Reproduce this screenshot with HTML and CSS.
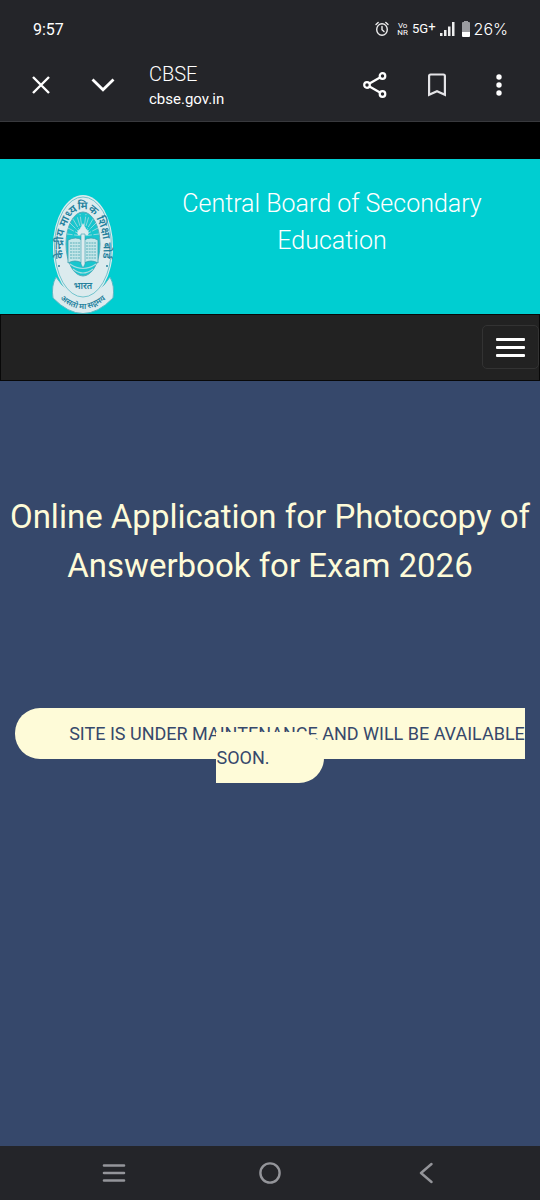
FILE: index.html
```
<!DOCTYPE html>
<html lang="en">
<head>
    <meta charset="UTF-8">
    <meta name="viewport" content="width=device-width, initial-scale=1.0">
    <title>CBSE</title>
    <link rel="stylesheet" href="styles.css">
</head>
<body>
    <!-- Phone status bar and browser toolbar -->
    <div class="top-bar">
        <div class="status-bar">
            <span class="time">9:57</span>
            <div class="status-icons">
                <svg width="14" height="16" viewBox="0 0 14 16" fill="none" stroke="#eee" stroke-width="1.4" stroke-linecap="round">
                    <ellipse cx="7" cy="8.500" rx="5.300" ry="5.800"/>
                    <path d="M7 5.500v3.200l2 1.800M1 3.500l2.200-2M13 3.500l-2.200-2"/>
                </svg>
                <span class="vonr"><span>Vo</span><span>NR</span></span>
                <span class="network">5G<span class="plus">+</span></span>
                <svg width="15" height="14" viewBox="0 0 15 14" fill="#eee">
                    <path d="M0 11h2.500v3H0zM4 8h2.500v6H4zM8 4.500h2.500V14H8zM12 0h2.500v14H12z"/>
                </svg>
                <svg class="battery" width="8" height="16" viewBox="0 0 8 16">
                    <path d="M2 0h4v1h1q1 0 1 1v9H0V2q0-1 1-1h1z" fill="#9b9ca0"/>
                    <path d="M0 11h8v4q0 1-1 1H1q-1 0-1-1z" fill="#fff"/>
                </svg>
                <span class="percent">26%</span>
            </div>
        </div>
        <div class="toolbar">
            <button class="tool-button" aria-label="Close">
                <svg width="18" height="18" viewBox="0 0 18 18" fill="none" stroke="#fff" stroke-width="2.400"><path d="M1 1l16 16M17 1L1 17"/></svg>
            </button>
            <button class="tool-button" aria-label="Minimize">
                <svg width="24" height="14" viewBox="0 0 24 14" fill="none" stroke="#fff" stroke-width="2.800"><path d="M1.500 1.500L12 11.700 22.500 1.500"/></svg>
            </button>
            <div class="site-info">
                <div class="site-title">CBSE</div>
                <div class="site-url">cbse.gov.in</div>
            </div>
            <button class="tool-button" aria-label="Share">
                <svg width="24" height="26" viewBox="0 0 24 26" fill="none" stroke="#fff" stroke-width="2.200">
                    <circle cx="4" cy="13" r="2.800"/>
                    <circle cx="19.500" cy="4" r="2.800"/>
                    <circle cx="19.500" cy="22" r="2.800"/>
                    <path d="M6.500 11.500L17 5.500M6.500 14.500L17 20.500"/>
                </svg>
            </button>
            <button class="tool-button" aria-label="Bookmark">
                <svg width="18" height="24" viewBox="0 0 18 24" fill="none" stroke="#e3e3e6" stroke-width="2.200"><path d="M1.100 21.800V3q0-1.500 1.500-1.500h12.800q1.500 0 1.500 1.500v18.800L9 18.300z"/></svg>
            </button>
            <button class="tool-button" aria-label="More options">
                <svg width="6" height="22" viewBox="0 0 6 22" fill="#fff"><circle cx="3" cy="3" r="2.700"/><circle cx="3" cy="11" r="2.700"/><circle cx="3" cy="19" r="2.700"/></svg>
            </button>
        </div>
    </div>

    <header class="site-header">
        <svg class="logo" width="66" height="120" viewBox="0 0 66 120" role="img" aria-label="CBSE logo">
            <defs>
                <path id="ring" d="M14 69A20.500 39 0 1 1 52 69"/>
                <path id="ribbon" d="M7 102Q33 128 59 102"/>
            </defs>
            <path d="M6 83Q1 92 3 104Q33 135 63 104Q65 92 60 83L54 91Q33 111 12 91z" fill="#dcebee" stroke="#55b9c4"/>
            <ellipse cx="33" cy="53" rx="30" ry="52" fill="#dcebee"/>
            <ellipse cx="33" cy="53" rx="28.500" ry="50" fill="none" stroke="#55b9c4" stroke-width=".8"/>
            <ellipse cx="33" cy="50" rx="17" ry="32" fill="#18c6ce" stroke="#55aebb"/>
            <!-- rays -->
            <path d="M33 42L18 34M33 42L20 29M33 42L23 25M33 42L27 22M33 42L30 20M33 42L36 20M33 42L39 22M33 42L43 25M33 42L46 29M33 42L48 34M33 42L17 40M33 42L49 40" stroke="#a9dde1" stroke-width=".8" stroke-dasharray="9 1.500"/>
            <path d="M28 41q-2-4 2-6l3-6 3 6q4 2 2 6z" fill="#dcebee"/>
            <!-- book and torch -->
            <path d="M18 46q8-4 14 0v23q-7-4-14 0zM34 46q7-4 14 0v23q-7-4-14 0z" fill="#c5e6e9" stroke="#359fae" stroke-width=".8"/>
            <path d="M20 49h10M20 52h10M20 55h10M20 58h10M20 61h10M20 64h10M36 49h10M36 52h10M36 55h10M36 58h10M36 61h10M36 64h10" stroke="#58afb9" stroke-width="1" stroke-dasharray="2 .7"/>
            <path d="M31 40h4v30l-2 4-2-4z" fill="#dcebee" stroke="#359fae" stroke-width=".6"/>
            <path d="M20 70Q33 79 46 70M23 75Q33 83 43 75" fill="none" stroke="#a9dde1" stroke-width="1.200"/>
            <text class="logo-ring"><textPath href="#ring" startOffset="50%">केन्द्रीय माध्यमिक शिक्षा बोर्ड</textPath></text>
            <text class="logo-name" x="33" y="95">भारत</text>
            <text class="logo-motto"><textPath href="#ribbon" startOffset="50%">असतो मा सद्गमय</textPath></text>
            <circle cx="9" cy="72" r="1" fill="#23809c"/>
            <circle cx="57" cy="72" r="1" fill="#23809c"/>
        </svg>
        <div class="board-name">Central Board of Secondary Education</div>
    </header>

    <nav class="navbar">
        <button class="menu-toggle" aria-label="Toggle navigation">
            <span></span>
            <span></span>
            <span></span>
        </button>
    </nav>

    <main class="content">
        <h1>Online Application for Photocopy of Answerbook for Exam 2026</h1>
        <p class="notice"><span class="badge">SITE IS UNDER MAINTENANCE AND WILL BE AVAILABLE SOON.</span></p>
    </main>

    <!-- Phone navigation keys -->
    <div class="phone-nav">
        <button aria-label="Recent apps">
            <svg width="24" height="20" viewBox="0 0 24 20" stroke="#94959a" stroke-width="2.600" stroke-linecap="round"><path d="M2 2.500h20M2 10h20M2 17.500h20"/></svg>
        </button>
        <button aria-label="Home">
            <svg width="24" height="24" viewBox="0 0 24 24" fill="none" stroke="#94959a" stroke-width="2.400"><circle cx="12" cy="12" r="9.600"/></svg>
        </button>
        <button aria-label="Back">
            <svg width="14" height="22" viewBox="0 0 14 22" fill="none" stroke="#94959a" stroke-width="2.400" stroke-linecap="round" stroke-linejoin="round"><path d="M12.500 2L2 11l10.500 9"/></svg>
        </button>
    </div>
</body>
</html>
```
FILE: styles.css
```
* {
    box-sizing: border-box;
}
body {
    margin: 0;
    min-height: 100vh;
    display: flex;
    flex-direction: column;
    background-color: #36486b;
    font-family: Roboto, sans-serif;
    font-weight: 400;
}
button {
    padding: 0;
    border: none;
    background: none;
    cursor: pointer;
}
svg {
    display: block;
}
.top-bar {
    background-color: #242529;
    color: #fff;
    border-bottom: 1px solid #38393d;
}
.status-bar {
    display: flex;
    justify-content: space-between;
    align-items: center;
    height: 58px;
    padding: 0 32px 0 33px;
    font-size: 16px;
}
.status-icons {
    display: flex;
    align-items: center;
    gap: 4px;
}
.vonr {
    display: flex;
    flex-direction: column;
    align-items: center;
    margin-left: 4px;
    font-size: 8px;
    line-height: 7px;
}
.network {
    display: flex;
    font-size: 13px;
    line-height: 16px;
}
.plus {
    line-height: 12px;
}
.battery {
    margin-left: 3px;
}
.percent {
    font-family: Inter, sans-serif;
    font-size: 16px;
    font-weight: 300;
}
.toolbar {
    display: flex;
    align-items: center;
    height: 63px;
    padding: 0 10px 10px;
}
.tool-button {
    display: flex;
    justify-content: center;
    align-items: center;
    width: 62px;
    height: 48px;
}
.site-info {
    flex: 1;
    padding: 3px 0 0 15px;
}
.site-title {
    font-size: 20px;
    font-weight: 300;
    line-height: 26px;
}
.site-url {
    font-size: 15px;
    line-height: 24px;
}
.site-header {
    display: flex;
    border-top: 37px solid #000;
    background-color: #00ced1;
}
.logo {
    flex: none;
    margin: 35px 0 0 50px;
}
.logo text {
    font-family: "Noto Sans Devanagari", "Noto Sans", sans-serif;
    fill: #23809c;
    text-anchor: middle;
    font-weight: 600;
}
.logo .logo-ring {
    font-size: 11px;
}
.logo .logo-name {
    font-size: 9px;
}
.logo .logo-motto {
    font-size: 8px;
}
.board-name {
    flex: 1;
    padding: 26px 28px 0 36px;
    color: #fff;
    font-size: 25px;
    font-weight: 300;
    line-height: 37px;
    text-align: center;
}
.navbar {
    display: flex;
    justify-content: flex-end;
    padding: 10px 0 11px;
    border: 1px solid #080808;
    background-color: #222;
}
.menu-toggle {
    display: flex;
    flex-direction: column;
    justify-content: center;
    align-items: center;
    gap: 5px;
    width: 57px;
    height: 44px;
    border: 1px solid #333;
    border-radius: 5px;
}
.menu-toggle span {
    width: 29px;
    height: 3px;
    border-radius: 1px;
    background-color: #fff;
}
.content {
    flex: 1;
    padding-top: 111px;
    text-align: center;
}
h1 {
    margin: 0;
    color: #fefbd8;
    font-size: 33px;
    font-weight: 400;
    line-height: 49px;
}
.notice {
    margin: 0;
    padding: 132px 15px 0;
    font-size: 18px;
    line-height: 24px;
}
.badge {
    padding: 15px 54px;
    border-radius: 25px;
    background-color: #fefbd8;
    color: #36486b;
}
.phone-nav {
    display: flex;
    justify-content: space-around;
    align-items: center;
    height: 54px;
    padding: 0 36px;
    background-color: #242529;
}
.phone-nav button {
    display: flex;
    justify-content: center;
    align-items: center;
    width: 48px;
    height: 48px;
}
```
